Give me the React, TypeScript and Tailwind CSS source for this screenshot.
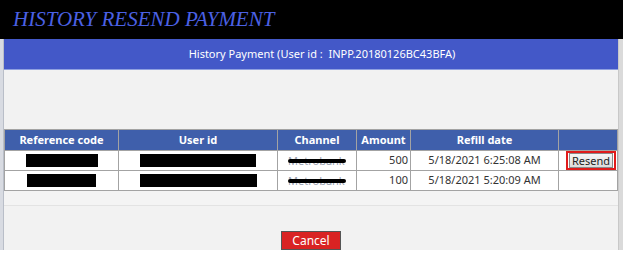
const font = { fontFamily: '"Noto Sans", Tahoma, sans-serif' };

function Redacted({ w }: { w: string }) {
  return <div className={`mx-auto h-[13px] bg-black ${w}`} />;
}

function Scribble({ label }: { label: string }) {
  return (
    <div className="relative mx-auto w-[58px] text-[11px] leading-[14px] text-gray-400">
      <span>{label}</span>
      <div className="absolute left-0 right-0 top-[5px] h-[4px] rounded-full bg-black" />
    </div>
  );
}

const rows = [
  { ref: 'w-[72px]', user: 'w-[116px]', amount: '500', date: '5/18/2021 6:25:08 AM', resend: true },
  { ref: 'w-[69px]', user: 'w-[117px]', amount: '100', date: '5/18/2021 5:20:09 AM', resend: false },
];

export default function App() {
  return (
    <div className="flex h-[258px] w-[623px] flex-col bg-white" style={font}>
      {/* Title */}
      <div className="h-[39px] shrink-0 bg-black pl-[13px] pt-[6px]">
        <h1
          className="text-[21px] italic leading-[26px] text-[#4b61e4]"
          style={{ fontFamily: '"Liberation Serif", "Times New Roman", serif' }}
        >
          HISTORY RESEND PAYMENT
        </h1>
      </div>

      <div className="flex h-[211px] shrink-0">
        <div className="w-[4px] border-r border-[#b9bec8] bg-[#d8dbe2]" />

        <div className="flex flex-1 flex-col bg-[#f2f2f2]">
          <div className="flex h-[31px] items-center justify-center border-b border-[#8fa0e0] bg-[#4358c8] pl-[22px] text-[11px] text-white">
            History Payment (User id :&nbsp; INPP.20180126BC43BFA)
          </div>

          <div className="pt-[59px]">
            <table className="w-full table-fixed border-collapse border border-[#a3a3a3] text-[11px]">
              <colgroup>
                <col className="w-[114px]" />
                <col className="w-[159px]" />
                <col className="w-[79px]" />
                <col className="w-[54px]" />
                <col className="w-[148px]" />
                <col />
              </colgroup>
              <thead>
                <tr className="h-[21px] bg-[#3f5fab] font-bold text-white">
                  <th className="border border-[#a3a3a3]">Reference code</th>
                  <th className="border border-[#a3a3a3]">User id</th>
                  <th className="border border-[#a3a3a3]">Channel</th>
                  <th className="border border-[#a3a3a3]">Amount</th>
                  <th className="border border-[#a3a3a3]">Refill date</th>
                  <th className="border border-[#a3a3a3]"></th>
                </tr>
              </thead>
              <tbody className="bg-white text-[#333]">
                {rows.map((r, i) => (
                  <tr key={i} className="h-[20px]">
                    <td className="border border-[#a3a3a3]"><Redacted w={r.ref} /></td>
                    <td className="border border-[#a3a3a3]"><Redacted w={r.user} /></td>
                    <td className="border border-[#a3a3a3]"><Scribble label="Metrobank" /></td>
                    <td className="border border-[#a3a3a3] pr-[2px] text-right">{r.amount}</td>
                    <td className="border border-[#a3a3a3] text-center">{r.date}</td>
                    <td className="border border-[#a3a3a3] p-0">
                      {r.resend && (
                        <div className="ml-auto mr-[1px] flex h-[19px] w-[50px] items-center justify-center border-2 border-[#e01b1b] px-[1px]">
                          <button className="h-[15px] w-full border border-[#8a8a8a] bg-gradient-to-b from-[#f6f6f6] to-[#dcdcdc] text-[11px] leading-[13px] text-[#222]">
                            Resend
                          </button>
                        </div>
                      )}
                    </td>
                  </tr>
                ))}
              </tbody>
            </table>
          </div>

          <div className="h-[15px] border-b border-[#e3e3e3] bg-[#f4f4f4]" />

          <div className="flex flex-1 items-end justify-center">
            <button className="h-[19px] w-[60px] border border-[#555] bg-[#d92323] text-[12px] text-white">
              Cancel
            </button>
          </div>
        </div>

        <div className="w-[5px] border-l border-[#c8c8c8] bg-[#dadada]" />
      </div>

      <div className="flex-1 bg-white" />
    </div>
  );
}
